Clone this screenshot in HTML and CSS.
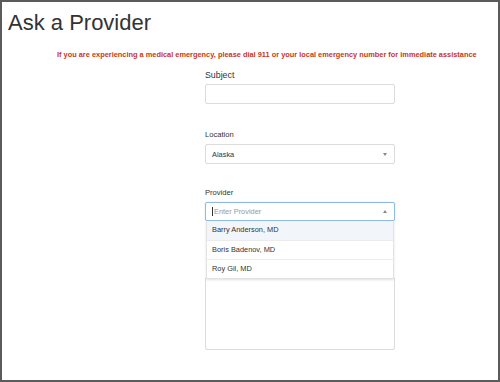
FILE: index.html
```html
<!DOCTYPE html>
<html>
<head>
<meta charset="utf-8">
<link rel="stylesheet" href="styles.css">
</head>
<body>
<div class="page">
  <h1 class="title">Ask a Provider</h1>
  <p class="warning">If you are experiencing a medical emergency, please dial 911 or your local emergency number for immediate assistance</p>
  <form class="form">
    <div class="field field-subject">
      <label class="label label-lg">Subject</label>
      <div class="input"></div>
    </div>
    <div class="field field-location">
      <label class="label">Location</label>
      <div class="input select">
        <span class="value">Alaska</span>
        <span class="caret caret-down"></span>
      </div>
    </div>
    <div class="field field-provider">
      <label class="label">Provider</label>
      <div class="combo">
        <div class="input select focused">
          <span class="cursor"></span><span class="placeholder">Enter Provider</span>
          <span class="caret caret-up"></span>
        </div>
        <ul class="menu">
          <li class="item active">Barry Anderson, MD</li>
          <li class="item">Boris Badenov, MD</li>
          <li class="item">Roy Gil, MD</li>
        </ul>
      </div>
    </div>
    <div class="textarea"></div>
  </form>
</div>
</body>
</html>
```
FILE: styles.css
```css
html, body {
  margin: 0;
  padding: 0;
  background: #fff;
}
.page {
  box-sizing: border-box;
  width: 500px;
  height: 382px;
  border: 2px solid #5b5b5b;
  font-family: "Liberation Sans", Arial, sans-serif;
  color: #333;
  overflow: hidden;
}
.title {
  margin: 8px 0 0 6px;
  font-size: 22px;
  font-weight: normal;
  line-height: 26px;
  color: #333;
}
.warning {
  margin: 14px 0 0 55px;
  font-size: 7.4px;
  font-weight: bold;
  line-height: 10px;
  color: #c9361c;
  white-space: nowrap;
}
.form {
  margin: 10px 0 0 203px;
  width: 190px;
}
.field {
  display: flex;
  flex-direction: column;
}
.label {
  font-size: 7.6px;
  line-height: 9px;
  margin-bottom: 5px;
  color: #333;
}
.label-lg {
  font-size: 8.8px;
  line-height: 10px;
  margin-bottom: 4px;
}
.input {
  box-sizing: border-box;
  height: 20px;
  border: 1px solid #dcdcdc;
  border-radius: 2px;
  background: #fff;
  display: flex;
  align-items: center;
  padding: 0 6px;
  font-size: 7.4px;
  position: relative;
}
.field-location {
  margin-top: 26px;
}
.field-provider {
  margin-top: 24px;
}
.value {
  color: #333;
}
.caret {
  position: absolute;
  right: 7px;
  top: 8px;
  width: 0;
  height: 0;
  border-left: 2.5px solid transparent;
  border-right: 2.5px solid transparent;
}
.caret-down {
  border-top: 3px solid #888;
}
.caret-up {
  border-bottom: 3px solid #888;
  top: 7px;
}
.combo {
  position: relative;
}
.focused {
  border-color: #8fbbe6;
  box-shadow: 0 0 2px rgba(102, 175, 233, 0.35);
  height: 19px;
}
.cursor {
  display: inline-block;
  width: 1px;
  height: 9px;
  background: #333;
  margin-right: 1px;
}
.placeholder {
  color: #999;
}
.menu {
  position: absolute;
  left: 1px;
  right: 1px;
  top: 19px;
  margin: 0;
  padding: 0;
  list-style: none;
  background: #fff;
  border: 1px solid #e3e3e3;
  border-top: none;
  box-shadow: 0 1px 2px rgba(0, 0, 0, 0.12);
  z-index: 2;
}
.item {
  box-sizing: border-box;
  height: 19px;
  line-height: 18px;
  padding: 0 5px;
  font-size: 7.4px;
  color: #333;
  border-top: 1px solid #ececec;
}
.item:first-child {
  border-top: none;
}
.item.active {
  background: #f2f6fa;
}
.textarea {
  box-sizing: border-box;
  margin-top: 56px;
  height: 73px;
  border: 1px solid #dcdcdc;
  border-radius: 2px;
  box-shadow: inset 0 0 1px rgba(0,0,0,0.05);
}
```
